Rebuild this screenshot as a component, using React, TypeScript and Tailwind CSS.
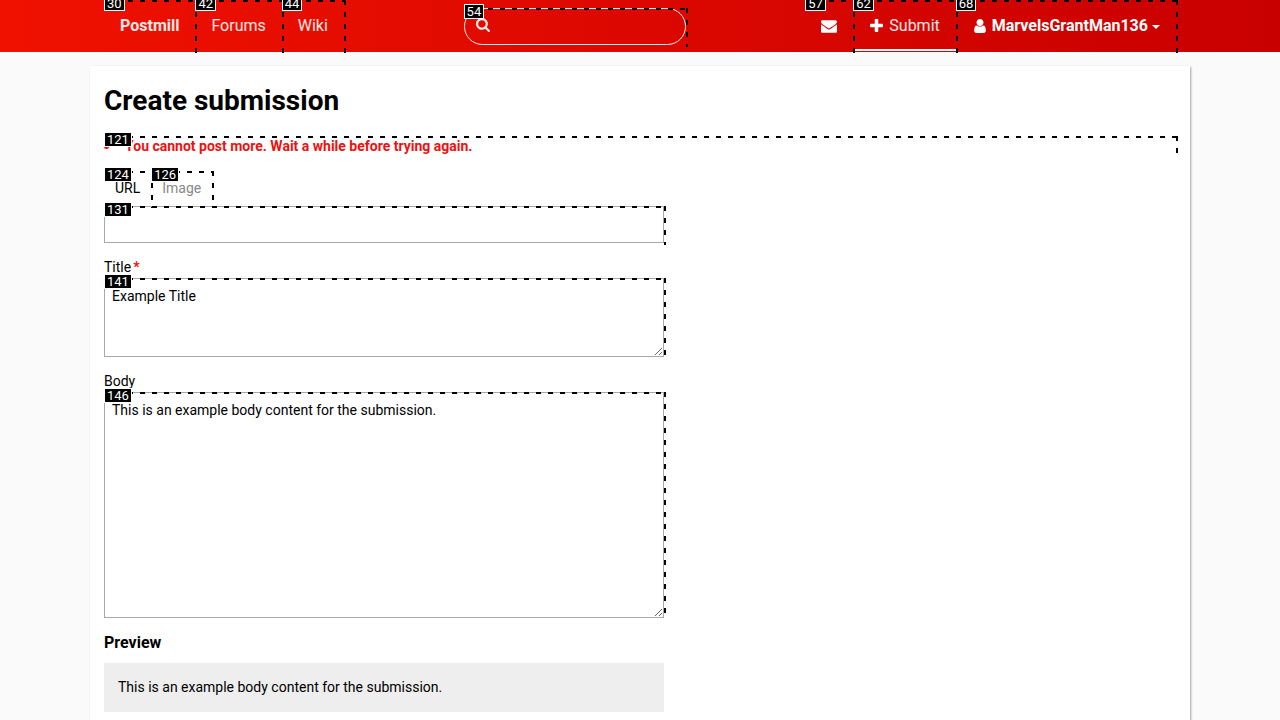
import type { ReactNode } from "react";

const paths = {
  search:
    "M1152 832q0-185-131.5-316.5t-316.5-131.5-316.5 131.5-131.5 316.5 131.5 316.5 316.5 131.5 316.5-131.5 131.5-316.5zm512 832q0 52-38 90t-90 38q-54 0-90-38l-343-342q-179 124-399 124-143 0-273.5-55.5t-225-150-150-225-55.5-273.5 55.5-273.5 150-225 225-150 273.5-55.5 273.5 55.5 225 150 150 225 55.5 273.5q0 220-124 399l343 343q37 37 37 90z",
  plus:
    "M1600 736v192q0 40-28 68t-68 28h-416v416q0 40-28 68t-68 28h-192q-40 0-68-28t-28-68v-416h-416q-40 0-68-28t-28-68v-192q0-40 28-68t68-28h416v-416q0-40 28-68t68-28h192q40 0 68 28t28 68v416h416q40 0 68 28t28 68z",
  mail:
    "M1792 710v794q0 66-47 113t-113 47h-1472q-66 0-113-47t-47-113v-794q44 49 101 87 362 246 497 345 57 42 92.5 65.5t94.5 48 110 24.5h2q51 0 110-24.5t94.5-48 92.5-65.5q170-123 498-345 57-39 100-87zm0-294q0 79-49 151t-122 123q-376 261-468 325-10 7-42.5 31t-54 38.5-52 32.5-57.5 27-50 9h-2q-23 0-50-9t-57.5-27-52-32.5-54-38.5-42.5-31q-91-64-262-182.5t-205-142.5q-62-42-117-115.5t-55-136.5q0-78 41.5-130t118.5-52h1472q65 0 112.5 47t47.5 113z",
  user:
    "M1536 1399q0 109-62.5 187t-150.5 78h-854q-88 0-150.5-78t-62.5-187q0-85 8.5-160.5t31.5-152 58.5-131 94-89 134.5-34.5q131 128 313 128t313-128q76 0 134.5 34.5t94 89 58.5 131 31.5 152 8.5 160.5zm-256-887q0 159-112.5 271.5t-271.5 112.5-271.5-112.5-112.5-271.5 112.5-271.5 271.5-112.5 271.5 112.5 112.5 271.5z",
};

function Icon({
  name,
  viewBox = "0 0 1792 1792",
  className,
}: {
  name: keyof typeof paths;
  viewBox?: string;
  className: string;
}) {
  return (
    <svg viewBox={viewBox} className={className} fill="currentColor" aria-hidden="true">
      <path d={paths[name]} />
    </svg>
  );
}

/* Dashed outline along the top and right edges, with a numbered tag in the corner. */
function Mark({ id }: { id: number }) {
  return (
    <span
      aria-hidden="true"
      className="pointer-events-none absolute -right-0.5 -bottom-0.5 top-0 left-0 font-normal"
    >
      <span className="absolute inset-x-0 top-0 z-10 h-0.5 bg-[repeating-linear-gradient(90deg,#000_0_5px,transparent_5px_12px)]" />
      <span className="absolute inset-y-0 right-0 z-10 w-0.5 bg-[repeating-linear-gradient(180deg,#000_0_5px,transparent_5px_12px)]" />
      <span className="absolute -top-1 left-0 z-20 border border-white bg-black px-0.5 text-[13px] leading-[13px] text-white">
        {id}
      </span>
    </span>
  );
}

function NavLink({
  id,
  className = "",
  label,
  children,
}: {
  id: number;
  className?: string;
  label?: string;
  children: ReactNode;
}) {
  return (
    <a
      href="#"
      aria-label={label}
      className={`relative flex items-center px-4 ${className}`}
    >
      {children}
      <Mark id={id} />
    </a>
  );
}

const field =
  "block w-full border border-[#a9a9a9] bg-white p-[7px] text-sm leading-[21px] text-black outline-none";

export default function App() {
  return (
    <div className="flex min-h-screen flex-col bg-[#fafafa] font-['Roboto',sans-serif] text-sm leading-[21px] text-black">
      <header className="bg-linear-to-r from-[#f01100] to-[#c80000] text-base text-white/90">
        <nav className="mx-auto flex h-[52px] max-w-[1100px] justify-between px-3.5 pb-px">
          <div className="flex">
            <NavLink id={30} className="font-bold">
              Postmill
            </NavLink>
            <NavLink id={42}>Forums</NavLink>
            <NavLink id={44}>Wiki</NavLink>
          </div>
          <form className="relative mt-2 h-[37px] w-[222px]" role="search">
            <input
              type="search"
              aria-label="Search"
              className="h-full w-full rounded-full border border-white/90 bg-transparent pr-3 pl-8 text-sm outline-none"
            />
            <Icon
              name="search"
              viewBox="0 128 1664 1664"
              className="absolute top-2.5 left-3 size-3.5"
            />
            <Mark id={54} />
          </form>
          <div className="flex">
            <NavLink id={57} label="Messages" className="text-white">
              <Icon name="mail" className="size-4" />
            </NavLink>
            <NavLink id={62} className="shadow-[inset_0_-2px_0_#fff]">
              <Icon
                name="plus"
                viewBox="192 128 1408 1408"
                className="mr-1.5 ml-px size-[13px] text-white"
              />
              Submit
            </NavLink>
            <button
              type="button"
              className="relative flex items-center px-4 font-bold text-white"
            >
              <Icon
                name="user"
                viewBox="256 128 1280 1536"
                className="mr-1.5 ml-0.5 h-3.5 w-3"
              />
              MarvelsGrantMan136
              <svg
                viewBox="0 0 8 4"
                className="mt-0.5 ml-1 h-1 w-2"
                fill="currentColor"
                aria-hidden="true"
              >
                <path d="M0 0h8L4 4z" />
              </svg>
              <Mark id={68} />
            </button>
          </div>
        </nav>
      </header>

      <main className="mx-auto mt-3.5 w-full max-w-[1100px] flex-1 bg-white px-3.5 pt-3.5 pb-2 shadow-[1px_1px_2px_rgba(0,0,0,0.35)]">
        <h1 className="text-[28px] leading-[42px] font-bold">Create submission</h1>
        <div role="alert" className="relative mt-3.5 font-bold text-[#e11]">
          <ul>
            <li className="flex before:mt-2 before:mr-4 before:size-[5px] before:rounded-full before:bg-current before:content-['']">
              You cannot post more. Wait a while before trying again.
            </li>
          </ul>
          <Mark id={121} />
        </div>

        <form className="mt-3.5 max-w-[560px]">
          <div className="flex h-[35px]" role="tablist">
            <button
              type="button"
              role="tab"
              aria-selected="true"
              className="relative px-[11px]"
            >
              URL
              <Mark id={124} />
            </button>
            <button
              type="button"
              role="tab"
              aria-selected="false"
              className="relative px-[11px] text-[#888]"
            >
              Image
              <Mark id={126} />
            </button>
          </div>
          <div className="relative">
            <input type="url" aria-label="URL" className={field} />
            <Mark id={131} />
          </div>

          <label htmlFor="title" className="mt-3.5 block">
            Title<b className="ml-0.5 text-[#e11]">*</b>
          </label>
          <div className="relative">
            <textarea id="title" rows={3} required defaultValue="Example Title" className={field} />
            <Mark id={141} />
          </div>

          <label htmlFor="body" className="mt-3.5 block">
            Body
          </label>
          <div className="relative">
            <textarea
              id="body"
              rows={10}
              defaultValue="This is an example body content for the submission."
              className={field}
            />
            <Mark id={146} />
          </div>

          <h2 className="mt-3.5 text-base leading-[21px] font-bold">Preview</h2>
          <div className="mt-2.5 bg-[#eee] p-3.5">
            <p>This is an example body content for the submission.</p>
          </div>
        </form>
      </main>
    </div>
  );
}
